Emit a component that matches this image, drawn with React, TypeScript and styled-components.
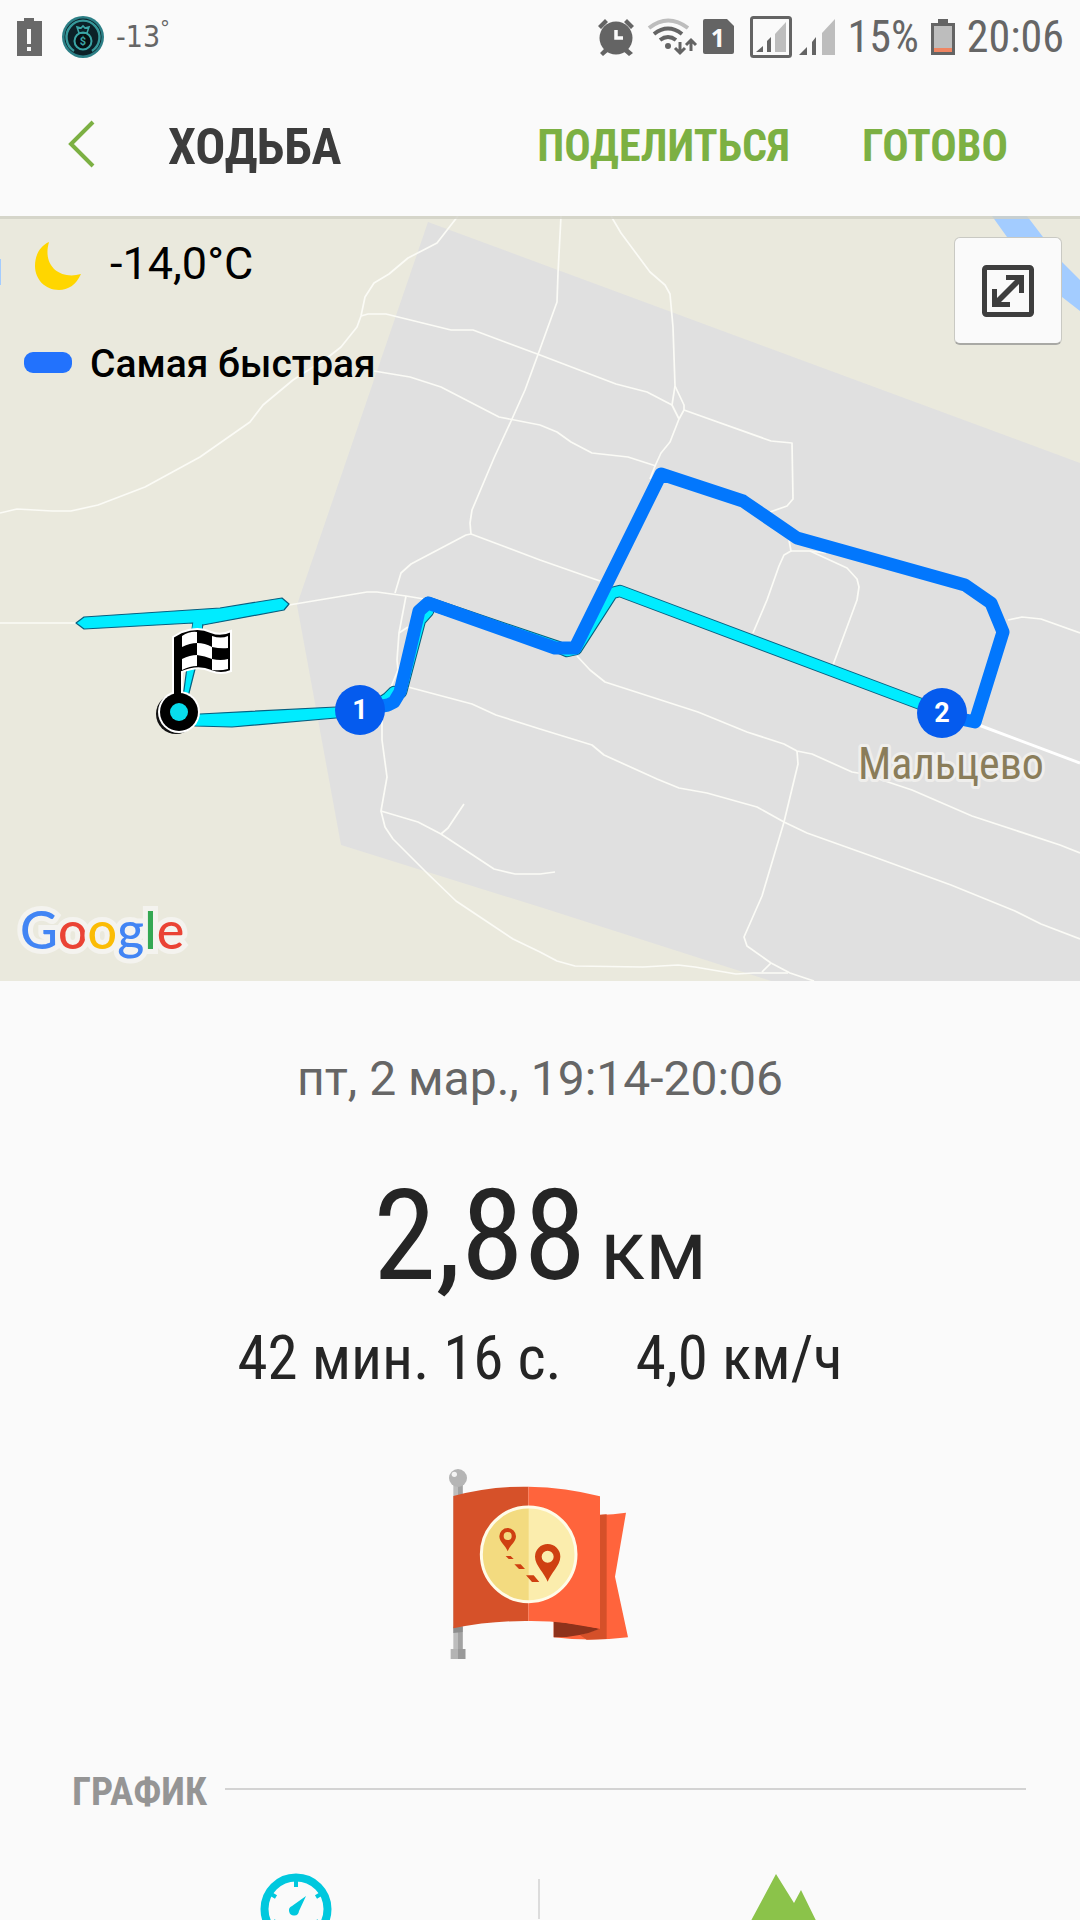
import React from "react";
import styled, { createGlobalStyle } from "styled-components";

const condensed = '"Roboto Condensed", Roboto, "Noto Sans", sans-serif';
const regular = 'Roboto, "Noto Sans", sans-serif';

const GlobalStyle = createGlobalStyle`
  * { box-sizing: border-box; }
  body { margin: 0; background: #fafafa; font-family: ${regular}; }
  h1, h2, p { margin: 0; }
  svg { display: block; flex: none; }
`;

const Screen = styled.div`
  height: 100vh;
  overflow: hidden;
  background: #fafafa;
  color: #252525;
`;

const StatusBar = styled.div`
  display: flex;
  align-items: center;
  justify-content: space-between;
  height: 72px;
  padding: 2px 16px 0;
  color: #666;
`;

const StatusGroup = styled.div<{ $gap: number }>`
  display: flex;
  align-items: center;
  gap: ${(p) => p.$gap}px;
`;

const StatusText = styled.span`
  font: 400 44px/52px ${condensed};
`;

const StatusTemp = styled.span`
  display: flex;
  align-items: flex-start;
  margin-left: -8px;
  font: 400 30px/44px "DejaVu Sans Condensed", "DejaVu Sans", sans-serif;
`;

const Degree = styled.span`
  font-size: 22px;
  line-height: 28px;
`;

const Header = styled.header`
  display: flex;
  align-items: center;
  height: 144px;
  padding: 0 72px 0 64px;
`;

const BackButton = styled.button`
  width: 104px;
  padding: 0 0 0 4px;
  border: 0;
  background: none;
`;

const Title = styled.h1`
  flex: 1;
  padding-top: 6px;
  font: 700 50px/60px ${condensed};
  color: #3c3c3c;
`;

const Actions = styled.div`
  display: flex;
  gap: 72px;
`;

const ActionButton = styled.button`
  padding: 4px 0 0;
  border: 0;
  background: none;
  color: #7cb043;
  font: 700 44px/52px ${condensed};
`;

const MapPanel = styled.section`
  position: relative;
  background: #eae9dd;
  overflow: hidden;
`;

const MapCanvas = styled.svg`
  width: 100%;
  height: auto;
`;

const MapLegend = styled.div`
  position: absolute;
  top: 20px;
  left: 24px;
  display: grid;
  gap: 50px;
  color: #000;
`;

const LegendRow = styled.div<{ $gap: number; $indent: number }>`
  display: flex;
  align-items: center;
  gap: ${(p) => p.$gap}px;
  padding-left: ${(p) => p.$indent}px;
`;

const MoonIcon = styled.svg`
  margin-top: 4px;
`;

const Temperature = styled.span`
  font: 400 45px/56px ${regular};
`;

const LegendName = styled.span`
  font: 500 39px/44px ${regular};
`;

const LegendPill = styled.span`
  width: 48px;
  height: 21px;
  margin-bottom: 4px;
  border-radius: 9px;
  background: #2272fd;
`;

const ExpandButton = styled.button`
  position: absolute;
  top: 21px;
  right: 18px;
  display: grid;
  place-items: center;
  width: 108px;
  height: 108px;
  padding: 0;
  border: 1px solid #c9c9c3;
  border-bottom: 2px solid #a9a9a5;
  border-radius: 6px;
  background: #fafafa;
`;

const GoogleMark = styled.div`
  position: absolute;
  left: 20px;
  bottom: 20px;
  display: flex;
  font: 500 52px/64px Lato, ${regular};
  -webkit-text-stroke: 10px #f4f3ef;
  paint-order: stroke fill;
`;

const Letter = styled.span<{ $color: string }>`
  color: ${(p) => p.$color};
`;

const Summary = styled.section`
  display: flex;
  flex-direction: column;
  align-items: center;
  padding-top: 70px;
`;

const DateLine = styled.p`
  font: 400 48px/56px ${regular};
  color: #666;
`;

const Distance = styled.p`
  display: flex;
  align-items: baseline;
  gap: 14px;
  margin-top: 54px;
  font: 400 127px/150px ${condensed};
`;

const Unit = styled.span`
  font: 400 83px/96px ${regular};
`;

const Stats = styled.p`
  display: flex;
  gap: 74px;
  margin: 12px 0 75px;
  font: 400 61px/70px ${condensed};
`;

const Reward = styled.div`
  padding-right: 3px;
`;

const ChartHeading = styled.div`
  display: flex;
  align-items: center;
  gap: 18px;
  padding: 109px 54px 0 72px;
`;

const ChartTitle = styled.h2`
  font: 700 39px/46px ${condensed};
  color: #959595;
`;

const Rule = styled.div`
  flex: 1;
  height: 2px;
  margin-bottom: 6px;
  background: #d3d3d3;
`;

const ChartTabs = styled.div`
  display: grid;
  grid-template-columns: 1fr 2px 1fr;
  padding: 58px 55px 0 53px;
`;

const ChartTab = styled.button`
  display: grid;
  justify-content: center;
  padding: 0;
  border: 0;
  background: none;
`;

const TabDivider = styled.div`
  height: 40px;
  margin-top: 6px;
  background: #dcdcdc;
`;

const roads = [
  "458,216 437,243 408,258 389,274 374,283 365,297 361,316 357,327 341,347 327,358 293,380 263,405 250,422 200,457 145,487 98,505 71,511 52,511 17,509 0,513",
  "361,316 368,314 386,314 451,330 473,330 540,355 616,384 647,392 672,405",
  "374,371 410,377 441,387 499,417 540,425 557,432 571,442 592,453 628,457 656,466",
  "561,216 558,273 557,302 540,349 525,390 512,419 494,458 472,510 470,523 471,534 466,535 411,564 401,573 395,593",
  "471,534 540,560 600,581",
  "611,216 621,233 650,272 665,285 670,294 673,327 675,386 672,405 679,419",
  "675,386 684,405 684,410 679,419 670,442 661,453 655,466 650,479",
  "684,410 771,441 792,443 793,499 787,506 770,512",
  "789,540 791,551 784,555 779,566 767,600 753,633",
  "791,551 810,551 826,553",
  "810,551 847,568 857,579 859,587 857,600 833,665",
  "0,623 77,623",
  "289,605 367,592 377,592 406,596 424,599",
  "406,596 399,633 397,660 398,670 391,687 389,700",
  "399,633 408,627",
  "382,720 382,740 387,777 381,811 385,827 393,839 427,873 456,901 513,939 540,952 557,961 575,966 643,967 678,965 695,967 736,974 753,973 788,973",
  "381,811 418,822 441,834 494,869 515,874 540,874 555,872",
  "441,834 448,828 464,804",
  "408,687 472,704 496,715 540,729 592,745 604,755 657,779 679,788 707,793 757,807 784,822 807,833 877,858 951,885 1015,911 1041,924 1080,939",
  "577,656 590,670 605,682 698,712 747,732 784,744 797,751 812,754 852,772 864,774 912,790 972,816 1060,845 1080,853",
  "797,751 798,764 784,822 762,896 744,937 747,946 771,963 790,973 814,981",
  "771,963 762,972",
  "1008,620 1022,617 1041,619 1080,633",
];

const fastest =
  "360,710 388,705 394,702 400,692 419,611 428,603 555,648 575,648 661,474 743,501 797,538 965,585 991,603 1003,632 975,722 942,715";
const slower = "428,611 420,620 401,692";
const bend = "376,706 388,698 394,692";
const shortcut = "428,603 558,647 567,651 576,649 612,593 620,591 942,712";

function RouteMap() {
  return (
    <MapCanvas viewBox="0 216 1080 765" role="img" aria-label="Маршрут">
      <rect x="0" y="216" width="1080" height="765" fill="#eae9dd" />
      <path d="M428 222L1080 463V981H771L540 907L341 845L297 605L300 596Z" fill="#e0e0e0" />
      <path d="M992 216H1027L1043 237L1062 262L1080 280V311L1062 297L1007 237Z" fill="#a3ccff" />
      <rect x="0" y="259" width="1" height="26" fill="#a3ccff" />
      <g fill="none" stroke="#fbfbf6" strokeWidth="1.7" strokeLinejoin="round">
        {roads.map((points) => (
          <polyline key={points} points={points} />
        ))}
        <polyline points="976,724 1080,763" strokeWidth="3" stroke="#fff" />
      </g>
      <rect x="0" y="216" width="1080" height="3" fill="#d0d0c4" opacity="0.8" />

      <g fill="#00ecff" stroke="#075f80" strokeWidth="1.2" strokeLinejoin="round">
        <path d="M193 622L184 690L180 712L189 693L195 669L203 624Z" />
        <path d="M84 617L220 608L282 598L289 604L284 610L203 625L193 623L84 629L76 623Z" />
        <path d="M179 714L200 714L336 707H360V717L336 718L232 727L195 726Z" />
      </g>
      <path d="M194 618H202V630H192Z" fill="#00ecff" />
      <g fill="none" strokeLinejoin="round" strokeLinecap="round">
        {[shortcut, slower, bend].map((points) => (
          <g key={points}>
            <polyline points={points} stroke="#075f80" strokeWidth="12.5" />
            <polyline points={points} stroke="#00ecff" strokeWidth="10.5" />
          </g>
        ))}
        <polyline points={fastest} stroke="#0277fd" strokeWidth="13" />
      </g>

      <g>
        <circle cx="176" cy="714" r="20" fill="#111" />
        <circle cx="179" cy="712" r="21" fill="#fff" />
        <path d="M173 637L182 632Q198 626 211 632Q221 636 231 631V671Q221 675 211 671Q198 665 182 672V700H173Z" fill="#000" stroke="#fff" strokeWidth="2" />
        <g fill="#fff">
          <path d="M182 636Q190 631 197 632V643Q190 643 182 647Z" />
          <path d="M212 636Q221 639 228 636V648Q221 649 212 647Z" />
          <path d="M197 643Q205 643 212 647V659Q205 656 197 655Z" />
          <path d="M182 659Q190 655 197 655V666Q190 666 182 670Z" />
          <path d="M212 659Q221 661 228 659V669Q221 671 212 670Z" />
        </g>
        <circle cx="179" cy="712" r="19" fill="#000" />
        <circle cx="179" cy="712" r="9" fill="#08dcec" />
      </g>

      <g fill="#055bee">
        <circle cx="360" cy="710" r="25" />
        <circle cx="942" cy="713" r="25" />
      </g>
      <g fill="#fff" fontFamily="Roboto, sans-serif" fontWeight="700" fontSize="27" textAnchor="middle">
        <text x="360" y="719">1</text>
        <text x="942" y="722">2</text>
      </g>
      <text
        x="951"
        y="779"
        textAnchor="middle"
        fontFamily='"Roboto Condensed", Roboto, sans-serif'
        fontSize="44"
        fill="#8a7d5a"
        stroke="#efeeec"
        strokeWidth="6"
        strokeLinejoin="round"
        paintOrder="stroke"
      >
        Мальцево
      </text>
    </MapCanvas>
  );
}

function RewardFlag() {
  return (
    <svg width="180" height="192" viewBox="87 54 540 576" role="img" aria-label="Награда">
      <path d="M100 100H128V600H100Z" fill="#bdbdbd" />
      <path d="M114 104H128V600H114Z" fill="#a2a2a2" />
      <path d="M100 530H128V546L100 549Z" fill="#8d8d8d" />
      <path d="M92 597H136V627H92Z" fill="#b4b4b4" />
      <path d="M114 597H136V627H114Z" fill="#999" />
      <circle cx="114" cy="84" r="27" fill="#b5b5b5" />
      <circle cx="103" cy="73" r="8" fill="#f4f4f4" />
      <path d="M540 195Q580 194 618 188L585 380L624 562Q510 575 401 562V510H540Z" fill="#ff643c" />
      <path d="M540 194L560 193V567L500 569L480 555L540 536Z" fill="#d55029" />
      <path d="M401 513L540 536Q480 562 401 562Z" fill="#8e321b" />
      <path d="M100 138Q210 108 325 110V513Q210 512 100 535Z" fill="#d65129" />
      <path d="M325 110Q440 112 540 139V536Q440 512 325 513Z" fill="#ff643c" />
      <circle cx="326" cy="313" r="142" fill="#fbedad" />
      <path d="M326 171A142 142 0 0 0 326 455Z" fill="#f3db80" />
      <circle cx="326" cy="313" r="142" fill="none" stroke="#fffbe8" strokeWidth="9" />
      <g fill="#cf4011">
        <path fillRule="evenodd" d="M263 304C257 287 238 276 238 259A25 25 0 0 1 288 259C288 276 269 287 263 304ZM263 246A12 12 0 1 0 263 270A12 12 0 1 0 263 246Z" />
        <path fillRule="evenodd" d="M383 395C375 371 345 346 345 320A38 38 0 0 1 421 320C421 346 391 371 383 395ZM383 302A18 18 0 1 0 383 338A18 18 0 1 0 383 302Z" />
        <path d="M257 318H272L281 327H266ZM283 343H302L315 357H297ZM318 376H341L358 396H336Z" />
      </g>
    </svg>
  );
}

function StatusIconsLeft() {
  return (
    <>
      <svg width="26" height="40" viewBox="0 0 26 40" aria-hidden="true">
        <path d="M1 4H8V1H18V4H26V39H1Z" fill="#696969" />
        <path d="M11 12H15V27H11ZM11 30H15V34H11Z" fill="#fafafa" />
      </svg>
      <svg width="42" height="42" viewBox="0 0 42 42" aria-hidden="true">
        <circle cx="21" cy="21" r="21" fill="#2c7f86" />
        <circle cx="21" cy="21" r="18.5" fill="#0c2128" />
        <path d="M12 35A16.5 16.5 0 1 1 30 35" fill="none" stroke="#36999b" strokeWidth="2.4" />
        <circle cx="21" cy="25" r="8.5" fill="#071014" stroke="#3aa5a5" strokeWidth="2" />
        <path d="M17 17L15 11L19 12L21 10L23 12L27 11L25 17Z" fill="none" stroke="#3aa5a5" strokeWidth="1.6" />
        <text x="21" y="29" fontSize="11" fontWeight="700" textAnchor="middle" fill="#3aa5a5" fontFamily="Roboto, sans-serif">$</text>
      </svg>
    </>
  );
}

function ConnectivityIcons() {
  return (
    <svg width="238" height="44" viewBox="598 14 238 44" aria-hidden="true">
      <g fill="#646464">
        <circle cx="616" cy="37" r="16.5" />
        <path d="M598 25L605 18L608 21L601 28ZM624 21L627 18L634 25L631 28ZM600 52L606 46L610 49L603 55ZM622 49L626 46L633 52L629 55Z" />
      </g>
      <path d="M616 29V37H623" fill="none" stroke="#fafafa" strokeWidth="3.5" />
      <g fill="none" strokeWidth="4">
        <path d="M649 27Q668 12 688 27" stroke="#bdbdbd" />
        <path d="M654 33Q668 22 682 33M660 39Q668 33 676 39" stroke="#646464" />
      </g>
      <circle cx="668" cy="45" r="3" fill="#646464" />
      <path d="M680 41V52M675 47L680 52L685 47M691 50V39M686 44L691 39L696 44" fill="none" stroke="#646464" strokeWidth="3" />
      <path d="M705 18H727L734 25V51Q734 53 732 53H705Q703 53 703 51V20Q703 18 705 18Z" fill="#646464" />
      <text x="718" y="46" fontFamily="Noto Sans, sans-serif" fontSize="25" fontWeight="700" textAnchor="middle" fill="#fafafa">1</text>
      <rect x="751.5" y="16.5" width="39" height="39" rx="2" fill="none" stroke="#646464" strokeWidth="3" />
      <path d="M756 51L763 45V51ZM767 40L771 36V51H767Z" fill="#646464" />
      <path d="M775 33L786 21V51H775Z" fill="#bdbdbd" />
      <path d="M799 54L807 46V54ZM812 41L816 36V54H812Z" fill="#646464" />
      <path d="M822 32L835 18V54H822Z" fill="#bdbdbd" />
    </svg>
  );
}

function BatteryIcon() {
  return (
    <svg width="24" height="38" viewBox="0 0 24 38" aria-hidden="true">
      <path d="M0 5H7V1H17V5H24V37H0Z" fill="#646464" />
      <path d="M3 8H21V30H3Z" fill="#bdbdbd" />
      <path d="M3 30H21V34H3Z" fill="#ef8562" />
    </svg>
  );
}

export default function App() {
  return (
    <Screen>
      <GlobalStyle />
      <StatusBar>
        <StatusGroup $gap={20}>
          <StatusIconsLeft />
          <StatusTemp>
            -13<Degree>°</Degree>
          </StatusTemp>
        </StatusGroup>
        <StatusGroup $gap={12}>
          <ConnectivityIcons />
          <StatusText>15%</StatusText>
          <BatteryIcon />
          <StatusText>20:06</StatusText>
        </StatusGroup>
      </StatusBar>

      <Header>
        <BackButton aria-label="Назад">
          <svg width="28" height="48" viewBox="0 0 28 48">
            <path d="M25 2L3 24L25 46" fill="none" stroke="#7cb043" strokeWidth="4" />
          </svg>
        </BackButton>
        <Title>ХОДЬБА</Title>
        <Actions>
          <ActionButton>ПОДЕЛИТЬСЯ</ActionButton>
          <ActionButton>ГОТОВО</ActionButton>
        </Actions>
      </Header>

      <MapPanel>
        <RouteMap />
        <MapLegend>
          <LegendRow $gap={28} $indent={10}>
            <MoonIcon width="48" height="48" viewBox="0 0 48 48" aria-hidden="true">
              <path d="M15 0C8 24 26 38 47 32C42 43 34 48 25 48C11 48 1 37 1 24C1 13 6 4 15 0Z" fill="#ffd600" />
            </MoonIcon>
            <Temperature>-14,0°C</Temperature>
          </LegendRow>
          <LegendRow $gap={18} $indent={0}>
            <LegendPill />
            <LegendName>Самая быстрая</LegendName>
          </LegendRow>
        </MapLegend>
        <ExpandButton aria-label="Развернуть карту">
          <svg width="52" height="52" viewBox="0 0 52 52">
            <rect x="2.5" y="2.5" width="47" height="47" rx="2" fill="none" stroke="#3e3e3e" strokeWidth="5" />
            <path d="M24 10H42V28H37V19L19 37H28V42H10V24H15V33L33 15H24Z" fill="#3e3e3e" />
          </svg>
        </ExpandButton>
        <GoogleMark>
          <Letter $color="#4285f4">G</Letter>
          <Letter $color="#ea4335">o</Letter>
          <Letter $color="#fbbc05">o</Letter>
          <Letter $color="#4285f4">g</Letter>
          <Letter $color="#34a853">l</Letter>
          <Letter $color="#ea4335">e</Letter>
        </GoogleMark>
      </MapPanel>

      <Summary>
        <DateLine>пт, 2 мар., 19:14-20:06</DateLine>
        <Distance>
          2,88 <Unit>км</Unit>
        </Distance>
        <Stats>
          <span>42 мин. 16 с.</span>
          <span>4,0 км/ч</span>
        </Stats>
        <Reward>
          <RewardFlag />
        </Reward>
      </Summary>

      <ChartHeading>
        <ChartTitle>ГРАФИК</ChartTitle>
        <Rule />
      </ChartHeading>
      <ChartTabs>
        <ChartTab aria-label="Скорость">
          <svg width="72" height="72" viewBox="0 0 72 72">
            <circle cx="36" cy="36" r="31.5" fill="none" stroke="#00c8de" strokeWidth="8" />
            <path d="M36 6V14M11 21L16 24M61 21L56 24M11 51L16 48M61 51L56 48" stroke="#00c8de" strokeWidth="4" />
            <path d="M46 23L39 38A5 5 0 1 1 32 33Z" fill="#00c8de" />
          </svg>
        </ChartTab>
        <TabDivider />
        <ChartTab aria-label="Высота">
          <svg width="90" height="72" viewBox="0 0 90 72">
            <path d="M38 1L56 30L63 17L90 72H0Z" fill="#8bc34a" />
          </svg>
        </ChartTab>
      </ChartTabs>
    </Screen>
  );
}
